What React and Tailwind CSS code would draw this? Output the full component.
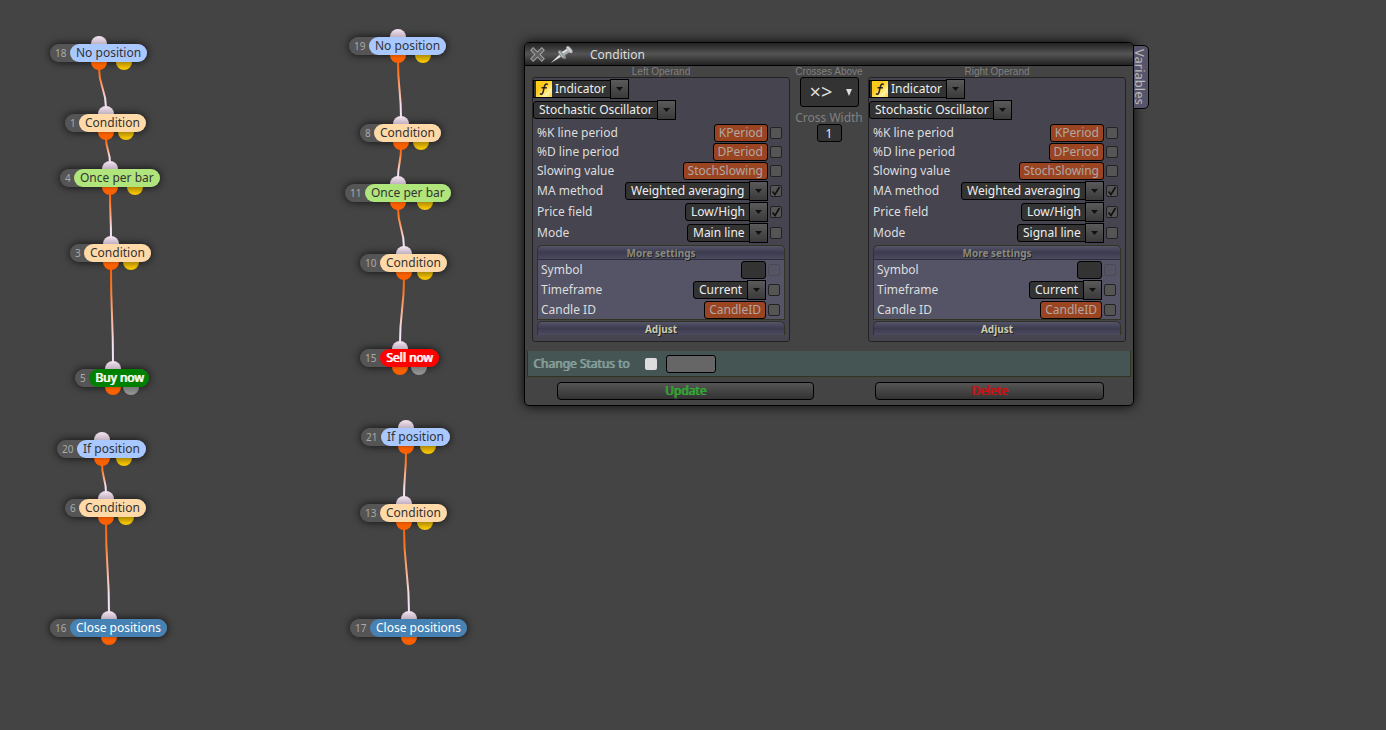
import React from 'react';

const NODE_COLORS = {
    position: 'bg-[#a9c8ff] text-[#333]',
    condition: 'bg-[#ffd9a8] text-[#333]',
    once: 'bg-[#b0e57c] text-[#333]',
    buy: 'bg-[#008000] text-white [text-shadow:1px_0_0_currentColor]',
    sell: 'bg-[#ff0000] text-white [text-shadow:1px_0_0_currentColor]',
    close: 'bg-[#4682b4] text-white',
};

// x / y: top left of the pill, port: centre of the input port, out: centre of the second output
const NODES = [
    { id: 18, label: 'No position', kind: 'position', x: 50, y: 44, port: 49, out: 74 },
    { id: 1, label: 'Condition', kind: 'condition', x: 65, y: 114, port: 41, out: 61 },
    { id: 4, label: 'Once per bar', kind: 'once', x: 60, y: 169, port: 50, out: 75 },
    { id: 3, label: 'Condition', kind: 'condition', x: 70, y: 244, port: 41, out: 61 },
    { id: 5, label: 'Buy now', kind: 'buy', x: 75, y: 369, port: 38, out: 56, idle: true },
    { id: 20, label: 'If position', kind: 'position', x: 57, y: 440, port: 45, out: 67 },
    { id: 6, label: 'Condition', kind: 'condition', x: 65, y: 499, port: 41, out: 61 },
    { id: 16, label: 'Close positions', kind: 'close', x: 50, y: 619, port: 59 },
    { id: 19, label: 'No position', kind: 'position', x: 349, y: 37, port: 49, out: 74 },
    { id: 8, label: 'Condition', kind: 'condition', x: 360, y: 124, port: 41, out: 61 },
    { id: 11, label: 'Once per bar', kind: 'once', x: 345, y: 184, port: 53, out: 80 },
    { id: 10, label: 'Condition', kind: 'condition', x: 360, y: 254, port: 44, out: 65 },
    { id: 15, label: 'Sell now', kind: 'sell', x: 360, y: 349, port: 40, out: 59, idle: true },
    { id: 21, label: 'If position', kind: 'position', x: 361, y: 428, port: 45, out: 67 },
    { id: 13, label: 'Condition', kind: 'condition', x: 360, y: 504, port: 44, out: 65 },
    { id: 17, label: 'Close positions', kind: 'close', x: 350, y: 619, port: 59 },
];

const LINKS = [
    [18, 1], [1, 4], [4, 3], [3, 5], [20, 6], [6, 16],
    [19, 8], [8, 11], [11, 10], [10, 15], [21, 13], [13, 17],
];

function Links() {
    const byId = id => NODES.find(n => n.id === id);
    return (
        <svg className="pointer-events-none absolute inset-0 w-full h-full" aria-hidden="true">
            {LINKS.map(([from, to]) => {
                const a = byId(from);
                const b = byId(to);
                const x1 = a.x + a.port;
                const y1 = a.y + 24;
                const x2 = b.x + b.port;
                const y2 = b.y - 6;
                const bend = (y2 - y1) / 2;
                const grad = `link-${from}-${to}`;
                return (
                    <g key={grad}>
                        <linearGradient id={grad} gradientUnits="userSpaceOnUse" x1={x1} y1={y1} x2={x1} y2={y2}>
                            <stop offset="0" stopColor="#fa6000" />
                            <stop offset="0.2" stopColor="#ff7722" />
                            <stop offset="0.8" stopColor="#f4e2f2" />
                        </linearGradient>
                        <path
                            d={`M${x1} ${y1} C${x1} ${y1 + bend} ${x2} ${y2 - bend} ${x2} ${y2}`}
                            stroke={`url(#${grad})`}
                            strokeWidth="2"
                            fill="none"
                        />
                    </g>
                );
            })}
        </svg>
    );
}

function Node({ node }) {
    return (
        <div className="absolute" style={{ left: node.x, top: node.y }}>
            <div className="absolute inset-0 rounded-full shadow-[0_0_8px_rgba(0,0,0,0.8)]" />
            <span className="absolute -top-2 -ml-2 size-4 rounded-full bg-linear-to-b from-[#f6e6f4] to-[#8f8090]" style={{ left: node.port }} />
            <span className="absolute top-[10px] -ml-2 size-4 rounded-full bg-linear-to-b from-[#d65200] from-50% to-[#fa6000] to-70%" style={{ left: node.port }} />
            {node.out && (
                <span
                    className={`absolute top-[10px] -ml-2 size-4 rounded-full bg-linear-to-b ${node.idle ? 'from-[#777] from-50% to-[#999]' : 'from-[#b08c00] from-50% to-[#f5c400] to-90%'}`}
                    style={{ left: node.out }}
                />
            )}
            <div className="relative flex h-[18px] items-center rounded-full bg-[#555] whitespace-nowrap">
                <span className={`pl-[5px] text-[10px] leading-[18px] text-[#aaa] ${node.id > 9 ? 'w-5' : 'w-[14px]'}`}>{node.id}</span>
                <span className={`rounded-full px-[6px] text-[12px] leading-[18px] ${NODE_COLORS[node.kind]}`}>{node.label}</span>
            </div>
        </div>
    );
}

function ArrowButton({ label }) {
    return (
        <button aria-label={`Open ${label}`} className="flex h-5 w-[19px] shrink-0 items-center justify-center border border-black bg-linear-to-b from-[#5a5a5a] to-[#3a3a3a]">
            <svg width="7" height="4" viewBox="0 0 7 4"><path d="M0 0h7L3.5 4z" fill="#111" /></svg>
        </button>
    );
}

function Combo({ label, value }) {
    return (
        <div className="flex items-center">
            <select aria-label={label} className="-mr-px h-[18px] appearance-none rounded-l-[3px] border border-black bg-[#333] pr-1 pl-[5px] text-[12px] leading-4 text-[#eee]">
                <option>{value}</option>
            </select>
            <ArrowButton label={label} />
        </div>
    );
}

function Check({ label, checked, disabled }) {
    return (
        <span className={`relative flex size-3 ${disabled ? 'opacity-20' : ''}`}>
            <input type="checkbox" aria-label={label} defaultChecked={checked} disabled={disabled} className="peer size-3 appearance-none rounded-[2px] border border-[#222] bg-[#555]" />
            <svg className="pointer-events-none absolute inset-0 hidden peer-checked:block" width="12" height="12" viewBox="0 0 12 12">
                <path d="M2.5 6.5 L5 9.5 L9.5 2" stroke="#111" strokeWidth="1.6" fill="none" />
            </svg>
        </span>
    );
}

function VariableInput({ label, value }) {
    return (
        <input aria-label={label} defaultValue={value} className="field-sizing-content h-[18px] rounded-[3px] border border-black bg-[#9a4422] px-1 text-[12px] leading-4 text-[#b0a8a4]" />
    );
}

function Field({ label, value, type, checked, scope }) {
    const name = `${scope} ${label}`;
    return (
        <div className={`flex items-center gap-[2px] ${type === 'combo' ? 'h-[21px]' : 'h-[19px]'}`}>
            <span className="mr-auto">{label}</span>
            {type === 'combo'
                ? <Combo label={name} value={value} />
                : <VariableInput label={name} value={value} />}
            <Check label={`${name} adjust`} checked={checked} />
        </div>
    );
}

function SectionButton({ children, className }) {
    return (
        <button className={`block h-[14px] w-full rounded-t-[5px] border border-b-0 border-[#333322] bg-linear-to-b from-[#55556a] via-[#3c3b50] to-[#4c4b60] text-center text-[10px] leading-3 font-bold [text-shadow:1px_1px_0_#222] ${className}`}>
            {children}
        </button>
    );
}

function Operand({ side, title, mode }) {
    return (
        <section className="w-[258px]">
            <h2 className="h-[11px] text-center font-['Liberation_Sans',sans-serif] text-[10px] leading-[11px] text-[#808080]">{title}</h2>
            <div className="rounded-[3px] border border-[#222] bg-[#45444f] pt-px pb-[6px]">
                <div className="flex items-center">
                    <div className="flex h-[18px] items-center border border-r-0 border-black bg-[#333] pl-[2px]">
                        <svg width="16" height="16" viewBox="0 0 15 15">
                            <defs>
                                <linearGradient id={`fx-${side}`} x1="0" y1="0" x2="1" y2="1">
                                    <stop offset="0" stopColor="#ffd21a" />
                                    <stop offset="0.35" stopColor="#ffc81a" />
                                    <stop offset="0.6" stopColor="#ffe25a" />
                                    <stop offset="0.75" stopColor="#fff3a8" />
                                    <stop offset="1" stopColor="#ffd530" />
                                </linearGradient>
                            </defs>
                            <rect width="15" height="15" fill={`url(#fx-${side})`} />
                            <path d="M11 3.4C9.4 2 8.2 3.4 7.8 5.5L6.6 10.4C6.2 12.3 5 12.8 3.8 11.8M5.2 6.4h5" stroke="#222" strokeWidth="1.4" fill="none" />
                        </svg>
                        <select aria-label={`${title} type`} className="h-4 appearance-none px-[3px] leading-4 text-[#eee]">
                            <option>Indicator</option>
                        </select>
                    </div>
                    <ArrowButton label={`${title} type`} />
                </div>
                <div className="mt-px">
                    <Combo label={`${title} indicator`} value="Stochastic Oscillator" />
                </div>
                <div className="pt-[3px] pr-[7px] pl-1">
                    <Field scope={title} label="%K line period" value="KPeriod" />
                    <Field scope={title} label="%D line period" value="DPeriod" />
                    <Field scope={title} label="Slowing value" value="StochSlowing" />
                    <Field scope={title} label="MA method" value="Weighted averaging" type="combo" checked />
                    <Field scope={title} label="Price field" value="Low/High" type="combo" checked />
                    <Field scope={title} label="Mode" value={mode} type="combo" />
                </div>
                <div className="mx-1 mt-[2px]">
                    <SectionButton className="text-[#8a8a80]">More settings</SectionButton>
                    <div className="border border-[#333322] border-t-[#2c2c3a] bg-[#555466] pr-1 pl-[3px]">
                        <div className="flex h-5 items-center gap-[2px]">
                            <span className="mr-auto">Symbol</span>
                            <input aria-label={`${title} symbol`} className="h-[18px] w-[25px] rounded-[3px] border border-black bg-[#333]" />
                            <Check label={`${title} symbol adjust`} disabled />
                        </div>
                        <div className="flex h-5 items-center gap-[2px]">
                            <span className="mr-auto">Timeframe</span>
                            <Combo label={`${title} timeframe`} value="Current" />
                            <Check label={`${title} timeframe adjust`} />
                        </div>
                        <div className="flex h-[19px] items-center gap-[2px]">
                            <span className="mr-auto">Candle ID</span>
                            <VariableInput label={`${title} candle ID`} value="CandleID" />
                            <Check label={`${title} candle ID adjust`} />
                        </div>
                    </div>
                </div>
                <div className="mx-1 mt-px">
                    <SectionButton className="text-[#ccccaa]">Adjust</SectionButton>
                </div>
            </div>
        </section>
    );
}

function CloseIcon() {
    return (
        <svg width="15" height="15" viewBox="0 0 15 15">
            <path d="M3.2 3.2l8.6 8.6M11.8 3.2l-8.6 8.6" stroke="#aaa" strokeWidth="4.4" strokeLinecap="square" />
            <path d="M3.2 3.2l8.6 8.6M11.8 3.2l-8.6 8.6" stroke="#606060" strokeWidth="2.6" strokeLinecap="square" />
        </svg>
    );
}

function PinIcon() {
    return (
        <svg width="24" height="18" viewBox="0 0 24 18">
            <path d="M0.5 17.2L9.6 8.4l1.8 2.2z" fill="#e8e8e8" />
            <ellipse cx="12" cy="8.6" rx="5.4" ry="2.4" transform="rotate(50 12 8.6)" fill="#8d9294" />
            <path d="M11.4 6.2L17.6 1.8l3 3.8-6.4 4.2z" fill="#a4a9ab" />
            <path d="M12 6.2l6-3.8 1 1.2-6 4z" fill="#e4e8ea" />
            <ellipse cx="19.4" cy="3.6" rx="4.2" ry="2" transform="rotate(50 19.4 3.6)" fill="#b8bdbf" />
            <path d="M17.4 1.2l3.8 4.4" stroke="#dde0e2" strokeWidth="1" />
            <path d="M8.8 5.6l4.4 5.4" stroke="#cfd3d5" strokeWidth="1" />
        </svg>
    );
}

function ConditionWindow() {
    return (
        <div className="absolute top-[42px] left-[524px] w-[610px] rounded-[5px] border border-black bg-[#444] text-[12px] leading-4 text-[#ddd] shadow-[0_0_12px_rgba(0,0,0,0.9)]">
            <button className="absolute top-[2px] left-full h-[64px] w-4 rounded-r-[5px] border border-black bg-[#55546a] text-[13px] leading-4 text-[#bbb] [writing-mode:vertical-rl]">Variables</button>
            <header className="flex h-[23px] items-center rounded-t-[4px] border-b border-black bg-linear-to-b from-[#222] via-[#555] to-[#222] pt-px pl-[5px]">
                <button aria-label="Close"><CloseIcon /></button>
                <button aria-label="Pin" className="ml-[5px]"><PinIcon /></button>
                <h1 className="ml-4">Condition</h1>
            </header>
            <div className="flex justify-between px-[7px]">
                <Operand side="left" title="Left Operand" mode="Main line" />
                <section className="flex flex-col items-center whitespace-nowrap text-[#808080]">
                    <span className="h-[11px] font-['Liberation_Sans',sans-serif] text-[10px] leading-[11px]">Crosses Above</span>
                    <button aria-label="Crosses above" className="flex h-[30px] w-[59px] items-center justify-between rounded-[3px] border border-black bg-[#333] pr-[6px] pl-[9px] text-[20px] text-[#ddd]">
                        ×&gt;
                        <svg width="6" height="7" viewBox="0 0 6 7"><path d="M0 0h6L3 7z" fill="#ddd" /></svg>
                    </button>
                    <label htmlFor="cross-width" className="mt-1 leading-[13px]">Cross Width</label>
                    <input id="cross-width" defaultValue="1" className="h-[18px] w-[25px] rounded-[3px] border border-black bg-[#333] text-center text-[#eee]" />
                </section>
                <Operand side="right" title="Right Operand" mode="Signal line" />
            </div>
            <div className="mx-[2px] mt-[9px] flex h-[26px] items-center border border-t-0 border-[#333322] bg-[#445553] pl-[5px] text-[#88a09c]">
                <label htmlFor="change-status" className="[text-shadow:1px_0_0_currentColor]">Change Status to</label>
                <input id="change-status" type="checkbox" className="ml-4 size-3 appearance-none rounded-[2px] bg-[#ddd]" />
                <input aria-label="New status" className="ml-[9px] h-[18px] w-[50px] rounded-[3px] border border-black bg-[#666]" />
            </div>
            <footer className="flex justify-between pt-[5px] pr-[29px] pb-[5px] pl-8">
                <button className="h-[18px] w-[257px] rounded-[4px] border border-black bg-linear-to-b from-[#555] to-[#333] leading-4 text-[#33aa33] [text-shadow:1px_0_0_currentColor]">Update</button>
                <button className="h-[18px] w-[229px] rounded-[4px] border border-black bg-linear-to-b from-[#555] to-[#333] leading-4 text-[#cc1111] [text-shadow:1px_0_0_currentColor]">Delete</button>
            </footer>
        </div>
    );
}

function App() {
    return (
        <main className="relative min-h-screen overflow-hidden bg-[#444] font-['Noto_Sans',sans-serif]">
            {NODES.map(node => <Node key={node.id} node={node} />)}
            <Links />
            <ConditionWindow />
        </main>
    );
}

export default App;
